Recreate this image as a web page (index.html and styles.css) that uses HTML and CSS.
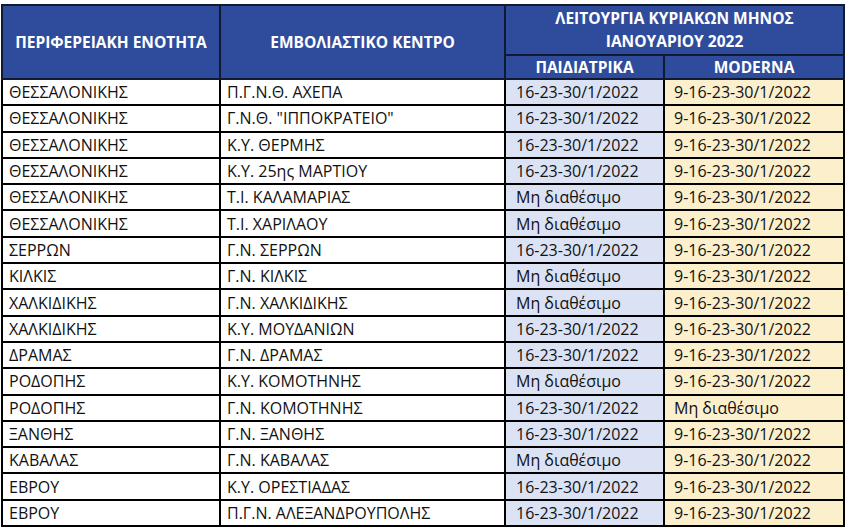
FILE: index.html
```html
<!DOCTYPE html>
<html lang="el">
<head>
<meta charset="utf-8">
<link rel="stylesheet" href="styles.css">
</head>
<body>
<table class="sched">
  <colgroup>
    <col class="c1"><col class="c2"><col class="c3"><col class="c4">
  </colgroup>
  <thead>
    <tr class="h1">
      <th rowspan="2">ΠΕΡΙΦΕΡΕΙΑΚΗ ΕΝΟΤΗΤΑ</th>
      <th rowspan="2">ΕΜΒΟΛΙΑΣΤΙΚΟ ΚΕΝΤΡΟ</th>
      <th colspan="2" class="title">ΛΕΙΤΟΥΡΓΙΑ ΚΥΡΙΑΚΩΝ ΜΗΝΟΣ<br>ΙΑΝΟΥΑΡΙΟΥ 2022</th>
    </tr>
    <tr class="h2">
      <th>ΠΑΙΔΙΑΤΡΙΚΑ</th>
      <th>MODERNA</th>
    </tr>
  </thead>
  <tbody>
    <tr><td>ΘΕΣΣΑΛΟΝΙΚΗΣ</td><td>Π.Γ.Ν.Θ. ΑΧΕΠΑ</td><td class="kid">16-23-30/1/2022</td><td class="mod">9-16-23-30/1/2022</td></tr>
    <tr><td>ΘΕΣΣΑΛΟΝΙΚΗΣ</td><td>Γ.Ν.Θ. "ΙΠΠΟΚΡΑΤΕΙΟ"</td><td class="kid">16-23-30/1/2022</td><td class="mod">9-16-23-30/1/2022</td></tr>
    <tr><td>ΘΕΣΣΑΛΟΝΙΚΗΣ</td><td>Κ.Υ. ΘΕΡΜΗΣ</td><td class="kid">16-23-30/1/2022</td><td class="mod">9-16-23-30/1/2022</td></tr>
    <tr><td>ΘΕΣΣΑΛΟΝΙΚΗΣ</td><td>Κ.Υ. 25ης ΜΑΡΤΙΟΥ</td><td class="kid">16-23-30/1/2022</td><td class="mod">9-16-23-30/1/2022</td></tr>
    <tr><td>ΘΕΣΣΑΛΟΝΙΚΗΣ</td><td>Τ.Ι. ΚΑΛΑΜΑΡΙΑΣ</td><td class="kid">Μη διαθέσιμο</td><td class="mod">9-16-23-30/1/2022</td></tr>
    <tr><td>ΘΕΣΣΑΛΟΝΙΚΗΣ</td><td>Τ.Ι. ΧΑΡΙΛΑΟΥ</td><td class="kid">Μη διαθέσιμο</td><td class="mod">9-16-23-30/1/2022</td></tr>
    <tr><td>ΣΕΡΡΩΝ</td><td>Γ.Ν. ΣΕΡΡΩΝ</td><td class="kid">16-23-30/1/2022</td><td class="mod">9-16-23-30/1/2022</td></tr>
    <tr><td>ΚΙΛΚΙΣ</td><td>Γ.Ν. ΚΙΛΚΙΣ</td><td class="kid">Μη διαθέσιμο</td><td class="mod">9-16-23-30/1/2022</td></tr>
    <tr><td>ΧΑΛΚΙΔΙΚΗΣ</td><td>Γ.Ν. ΧΑΛΚΙΔΙΚΗΣ</td><td class="kid">Μη διαθέσιμο</td><td class="mod">9-16-23-30/1/2022</td></tr>
    <tr><td>ΧΑΛΚΙΔΙΚΗΣ</td><td>Κ.Υ. ΜΟΥΔΑΝΙΩΝ</td><td class="kid">16-23-30/1/2022</td><td class="mod">9-16-23-30/1/2022</td></tr>
    <tr><td>ΔΡΑΜΑΣ</td><td>Γ.Ν. ΔΡΑΜΑΣ</td><td class="kid">16-23-30/1/2022</td><td class="mod">9-16-23-30/1/2022</td></tr>
    <tr><td>ΡΟΔΟΠΗΣ</td><td>Κ.Υ. ΚΟΜΟΤΗΝΗΣ</td><td class="kid">Μη διαθέσιμο</td><td class="mod">9-16-23-30/1/2022</td></tr>
    <tr><td>ΡΟΔΟΠΗΣ</td><td>Γ.Ν. ΚΟΜΟΤΗΝΗΣ</td><td class="kid">16-23-30/1/2022</td><td class="mod">Μη διαθέσιμο</td></tr>
    <tr><td>ΞΑΝΘΗΣ</td><td>Γ.Ν. ΞΑΝΘΗΣ</td><td class="kid">16-23-30/1/2022</td><td class="mod">9-16-23-30/1/2022</td></tr>
    <tr><td>ΚΑΒΑΛΑΣ</td><td>Γ.Ν. ΚΑΒΑΛΑΣ</td><td class="kid">Μη διαθέσιμο</td><td class="mod">9-16-23-30/1/2022</td></tr>
    <tr><td>ΕΒΡΟΥ</td><td>Κ.Υ. ΟΡΕΣΤΙΑΔΑΣ</td><td class="kid">16-23-30/1/2022</td><td class="mod">9-16-23-30/1/2022</td></tr>
    <tr><td>ΕΒΡΟΥ</td><td>Π.Γ.Ν. ΑΛΕΞΑΝΔΡΟΥΠΟΛΗΣ</td><td class="kid">16-23-30/1/2022</td><td class="mod">9-16-23-30/1/2022</td></tr>
  </tbody>
</table>
</body>
</html>
```

FILE: styles.css
```css
html, body {
  margin: 0;
  padding: 0;
  background: #ffffff;
}
body {
  padding: 4px 0 0 1px;
  font-family: "Open Sans", "Noto Sans", "DejaVu Sans", sans-serif;
  color: #111111;
}
.sched {
  border-collapse: collapse;
  table-layout: fixed;
  width: 842px;
  border: 2px solid #000000;
}
.c1 { width: 218px; }
.c2 { width: 285px; }
.c3 { width: 159px; }
.c4 { width: 180px; }

.sched th {
  background: #2f4c9c;
  color: #ffffff;
  font-weight: 700;
  font-size: 15.5px;
  text-align: center;
  vertical-align: middle;
  border: 2px solid #111a33;
  padding: 0;
  line-height: 20px;
  white-space: nowrap;
}
.sched .h1 { height: 50px; }
.sched .h2 { height: 24px; }
.sched .title { line-height: 23px; }

.sched tbody tr { height: 26.3px; }
.sched td {
  border: 2px solid #000000;
  font-size: 16px;
  padding: 0 6px;
  line-height: 20px;
  white-space: nowrap;
  overflow: hidden;
}
.sched td.kid {
  background: #dbe2f3;
  padding-left: 10px;
}
.sched td.mod {
  background: #fcefcc;
  padding-left: 9px;
}
```
